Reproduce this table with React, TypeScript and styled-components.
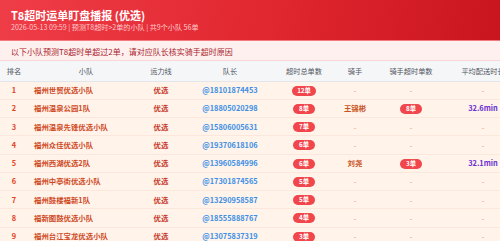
import React from "react";
import styled, { createGlobalStyle } from "styled-components";

const Global = createGlobalStyle`
  html, body { margin: 0; padding: 0; background: #ffffff; overflow: hidden; }
  body { font-family: "Noto Sans CJK SC", "Noto Sans", sans-serif; }
  * { box-sizing: border-box; }
`;

const Page = styled.div`
  width: 500px;
  height: 241px;
  overflow: hidden;
  background: #fff;
`;

const Header = styled.header`
  height: 41px;
  padding: 9px 11px 0;
  background: linear-gradient(100deg, #ef3d47 0%, #e0262f 55%, #c9151f 100%);
  border-bottom: 1px solid #f07c82;
  color: #fff;
`;

const Title = styled.div`
  font-size: 11px;
  line-height: 13px;
  font-weight: 700;
`;

const Sub = styled.div`
  font-size: 7.1px;
  line-height: 10px;
  color: #ffc9cc;
`;

const Notice = styled.div`
  height: 20px;
  padding: 2px 11px 0;
  background: #fff0f0;
  border-bottom: 1px solid #fbd6d8;
  color: #a8232b;
  font-size: 8px;
  line-height: 17px;
  white-space: nowrap;
`;

const Table = styled.table`
  width: 528px;
  table-layout: fixed;
  border-collapse: collapse;
`;

const Th = styled.th`
  height: 20px;
  padding: 0;
  background: #f5f6f8;
  border-bottom: 1px solid #e3e5ea;
  color: #50555e;
  font-size: 7.2px;
  font-weight: 400;
  text-align: center;
  line-height: 10px;
  white-space: nowrap;
  overflow: hidden;
`;

const Tr = styled.tr`
  background: #fff3ea;
  border-bottom: 1px solid #fbe7dc;
`;

type Align = "left" | "center";
const Td = styled.td<{ $align?: Align; $color?: string; $pl?: number }>`
  height: 18.25px;
  padding: 0 0 0 ${(p) => p.$pl ?? 0}px;
  text-align: ${(p) => p.$align ?? "center"};
  color: ${(p) => p.$color ?? "#333"};
  font-size: 7.4px;
  font-weight: 700;
  line-height: 10px;
  white-space: nowrap;
  overflow: hidden;
`;

const Badge = styled.span`
  display: inline-block;
  height: 10px;
  padding: 0 5.5px;
  border-radius: 5px;
  background: #f0464c;
  color: #fff;
  font-size: 6.3px;
  font-weight: 700;
  line-height: 10px;
  vertical-align: middle;
`;

const Dash = styled.span`
  color: #ea8a62;
  font-weight: 400;
  font-size: 7px;
`;

const cols = [28, 116, 34, 104, 44, 58, 54, 90];

type Row = {
  rank: number;
  team: string;
  phone: string;
  total: number;
  rider?: string;
  riderCount?: number;
  avg?: string;
};

const rows: Row[] = [
  { rank: 1, team: "福州世贸优选小队", phone: "18101874453", total: 12 },
  { rank: 2, team: "福州温泉公园1队", phone: "18805020298", total: 8, rider: "王锦彬", riderCount: 8, avg: "32.6min" },
  { rank: 3, team: "福州温泉先锋优选小队", phone: "15806005631", total: 7 },
  { rank: 4, team: "福州众佳优选小队", phone: "19370618106", total: 6 },
  { rank: 5, team: "福州西湖优选2队", phone: "13960584996", total: 6, rider: "刘尧", riderCount: 3, avg: "32.1min" },
  { rank: 6, team: "福州中亭街优选小队", phone: "17301874565", total: 5 },
  { rank: 7, team: "福州鼓楼福新1队", phone: "13290958587", total: 5 },
  { rank: 8, team: "福新图鼓优选小队", phone: "18555888767", total: 4 },
  { rank: 9, team: "福州台江宝龙优选小队", phone: "13075837319", total: 3 },
];

const headers = ["排名", "小队", "运力线", "队长", "超时总单数", "骑手", "骑手超时单数", "平均配送时长"];

export default function App() {
  return (
    <Page>
      <Global />
      <Header>
        <Title>T8超时运单盯盘播报 (优选)</Title>
        <Sub>2026-05-13 09:59 | 预测T8超时&gt;2单的小队 | 共9个小队 56单</Sub>
      </Header>
      <Notice>以下小队预测T8超时单超过2单，请对应队长核实骑手超时原因</Notice>
      <Table>
        <colgroup>
          {cols.map((w, i) => (
            <col key={i} style={{ width: w }} />
          ))}
        </colgroup>
        <thead>
          <tr>
            {headers.map((h) => (
              <Th key={h}>{h}</Th>
            ))}
          </tr>
        </thead>
        <tbody>
          {rows.map((r) => (
            <Tr key={r.rank}>
              <Td $color="#e2431d">{r.rank}</Td>
              <Td $align="left" $pl={6} $color="#cf4a1f">{r.team}</Td>
              <Td $color="#c63a2c">优选</Td>
              <Td $color="#3c8fe6">@{r.phone}</Td>
              <Td>
                <Badge>{r.total}单</Badge>
              </Td>
              <Td $color="#c9531f">{r.rider ?? <Dash>-</Dash>}</Td>
              <Td>{r.riderCount ? <Badge>{r.riderCount}单</Badge> : <Dash>-</Dash>}</Td>
              <Td $color="#6a2fd3">{r.avg ?? <Dash>-</Dash>}</Td>
            </Tr>
          ))}
        </tbody>
      </Table>
    </Page>
  );
}
